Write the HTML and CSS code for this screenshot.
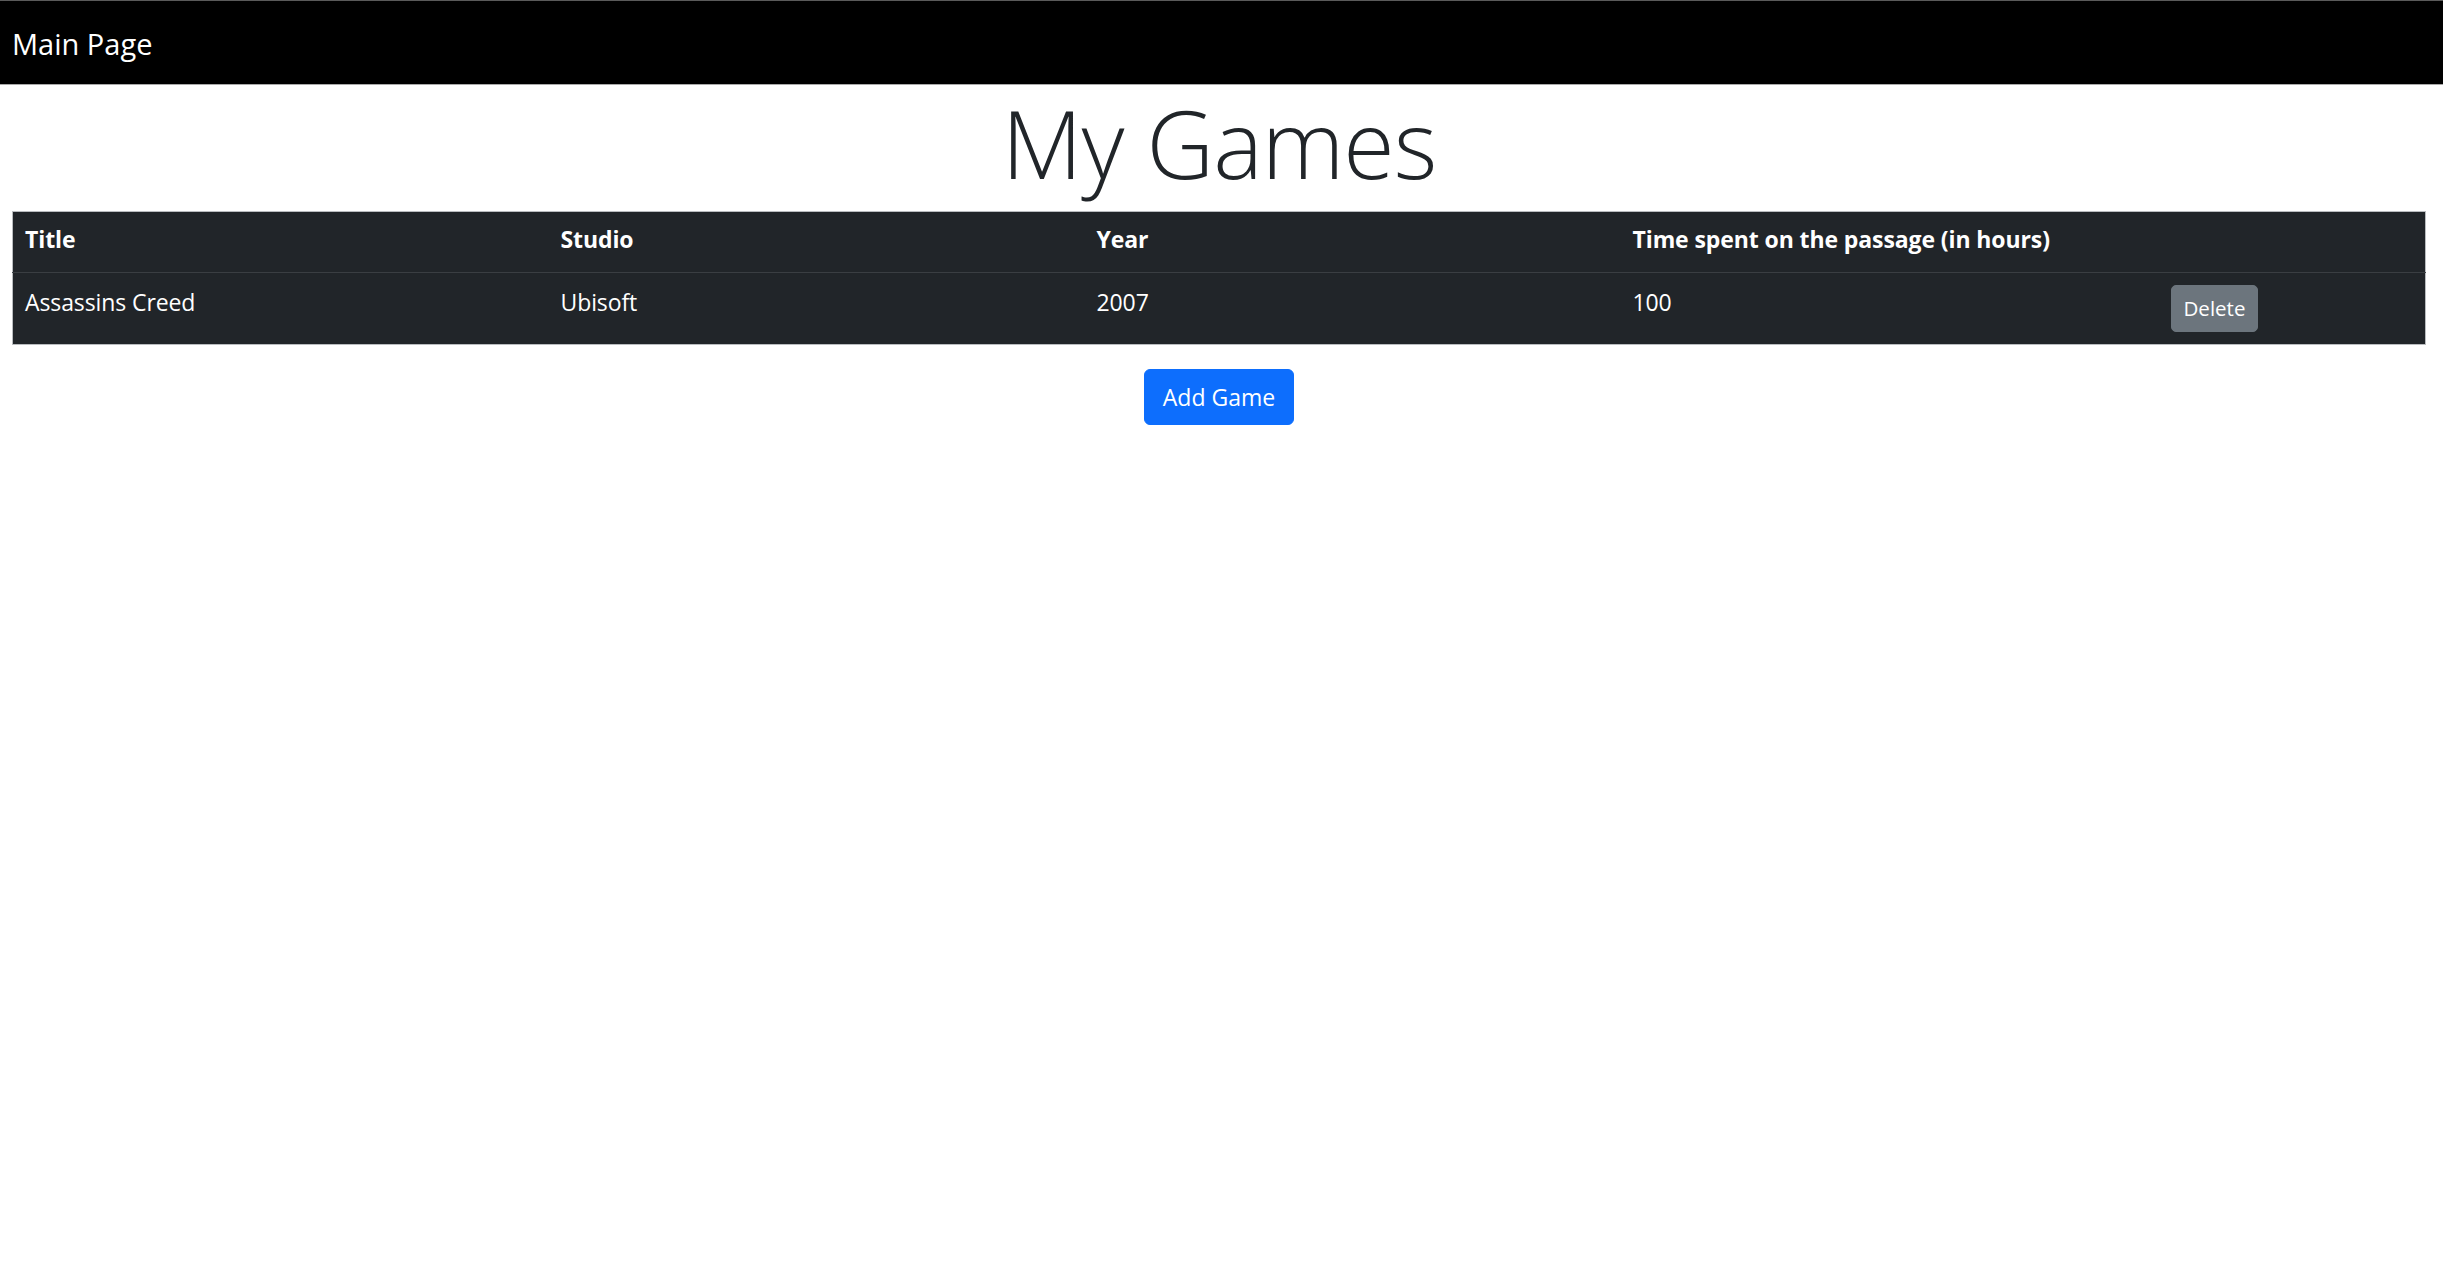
FILE: index.html
```html
<!DOCTYPE html>
<html lang="en">
<head>
<meta charset="utf-8">
<title>My Games</title>
<link rel="stylesheet" href="styles.css">
</head>
<body>
<nav class="navbar">
  <a class="brand" href="#">Main Page</a>
</nav>
<main class="page">
  <h1 class="title">My Games</h1>
  <table class="games">
    <colgroup>
      <col class="col-main">
      <col class="col-main">
      <col class="col-main">
      <col class="col-main">
      <col class="col-action">
    </colgroup>
    <thead>
      <tr>
        <th>Title</th>
        <th>Studio</th>
        <th>Year</th>
        <th>Time spent on the passage (in hours)</th>
        <th></th>
      </tr>
    </thead>
    <tbody>
      <tr>
        <td>Assassins Creed</td>
        <td>Ubisoft</td>
        <td>2007</td>
        <td>100</td>
        <td><button class="btn btn-delete" type="button">Delete</button></td>
      </tr>
    </tbody>
  </table>
  <div class="actions">
    <button class="btn btn-add" type="button">Add Game</button>
  </div>
</main>
</body>
</html>
```
FILE: styles.css
```css
html, body {
  margin: 0;
  padding: 0;
  background: #fff;
}
body {
  font-family: "Open Sans", "Noto Sans", sans-serif;
  font-size: 24px;
  line-height: 1.5;
  color: #212529;
}
.navbar {
  background: #000;
  border-top: 1px solid #5a5a5a;
  border-bottom: 1px solid #a9a9a9;
  height: 83px;
  display: flex;
  align-items: center;
  padding: 0 12px;
}
.brand {
  color: #fff;
  text-decoration: none;
  font-size: 29px;
  line-height: 1.5;
  letter-spacing: 0;
  margin-top: 2px;
}
.page {
  padding: 0 17px 0 12px;
}
.title {
  margin: 0 0 11px;
  text-align: center;
  font-size: 93.5px;
  font-weight: 300;
  line-height: 115px;
  letter-spacing: -1px;
  color: #212529;
}
.games {
  width: 100%;
  table-layout: fixed;
  border-collapse: collapse;
  background: #212529;
  color: #fff;
  border: 1px solid #b9bcbf;
  margin-bottom: 24px;
}
.col-main {
  width: 536px;
}
.games th,
.games td {
  padding: 11px 12px 12px;
  text-align: left;
  vertical-align: top;
  font-size: 23px;
  line-height: 36px;
  letter-spacing: -0.1px;
}
.games th {
  font-weight: 700;
  padding: 9px 12px 15px;
}
.games thead tr {
  border-bottom: 1px solid #3a3e42;
}
.btn {
  font-family: inherit;
  border: 1px solid transparent;
  color: #fff;
  cursor: pointer;
}
.btn-delete {
  background: #6c757d;
  border-color: #6c757d;
  font-size: 20.5px;
  line-height: 33px;
  padding: 6px 12px;
  border-radius: 5px;
  letter-spacing: 0;
  margin: 1px 0 0 2px;
}
.actions {
  display: flex;
  justify-content: center;
}
.btn-add {
  background: #0d6efd;
  border-color: #0d6efd;
  font-size: 23px;
  line-height: 36px;
  padding: 9px 18px;
  border-radius: 6px;
  letter-spacing: 0;
}
```
